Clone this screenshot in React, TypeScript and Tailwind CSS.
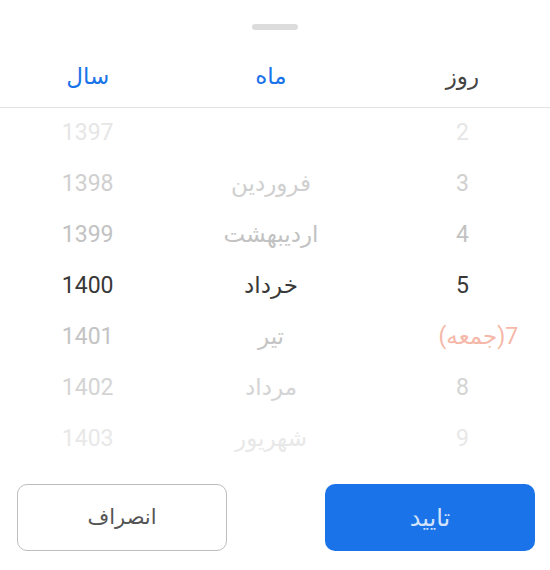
import React from "react";

const rows = [
  { year: "1397", month: "", day: "2", tone: "text-[#e6e6e6]" },
  { year: "1398", month: "فروردین", day: "3", tone: "text-[#cfcfcf]" },
  { year: "1399", month: "اردیبهشت", day: "4", tone: "text-[#c2c2c2]" },
  { year: "1400", month: "خرداد", day: "5", tone: "text-[#383838]" },
  { year: "1401", month: "تیر", day: "7(جمعه)", tone: "text-[#c4c4c4]", holiday: true },
  { year: "1402", month: "مرداد", day: "8", tone: "text-[#d4d4d4]" },
  { year: "1403", month: "شهریور", day: "9", tone: "text-[#e8e8e8]" },
];

const App: React.FC = () => {
  return (
    <div
      dir="rtl"
      className="w-[550px] h-[570px] bg-white flex flex-col"
      style={{ fontFamily: "Roboto, 'DejaVu Sans', sans-serif" }}
    >
      <div className="flex justify-center pt-6">
        <div className="w-[46px] h-[6px] rounded-full bg-[#dcdcdc]" />
      </div>

      <div className="grid grid-cols-3 h-[78px] pt-[18px] border-b border-[#e2e2e2] text-[23px]">
        <div className="flex items-center justify-center pl-[8px] text-[#444]">روز</div>
        <div className="flex items-center justify-center pr-[8px] text-[#1a73e8]">ماه</div>
        <div className="flex items-center justify-center pr-[8px] text-[#1a73e8]">سال</div>
      </div>

      <div className="flex flex-col text-[23px]">
        {rows.map((r, i) => (
          <div key={i} className="grid grid-cols-3 h-[51px] items-center">
            <div
              className={`flex justify-center ${r.holiday ? "text-[#f5b8a8] pl-[40px]" : `pl-[8px] ${r.tone}`}`}
            >
              {r.day}
            </div>
            <div className={`flex justify-center pr-[8px] ${r.tone}`}>{r.month}</div>
            <div className={`flex justify-center pr-[8px] ${r.tone}`}>{r.year}</div>
          </div>
        ))}
      </div>

      <div className="flex justify-between pr-[15px] pl-[17px] mt-[19px]">
        <button className="w-[210px] h-[67px] rounded-[10px] bg-[#1a73e8] text-[#d3e3fb] text-[24px]">
          تایید
        </button>
        <button className="w-[210px] h-[67px] rounded-[10px] border border-[#bdbdbd] text-[#555] text-[21px]">
          انصراف
        </button>
      </div>
    </div>
  );
};

export default App;
